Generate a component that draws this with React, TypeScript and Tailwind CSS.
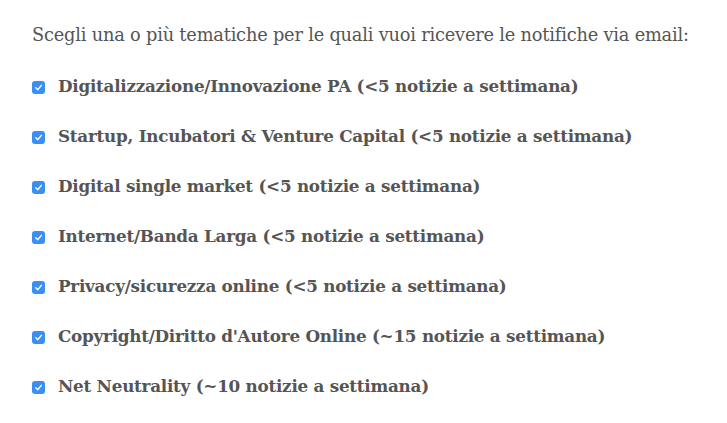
import React from 'react';

const topics = [
  'Digitalizzazione/Innovazione PA (<5 notizie a settimana)',
  'Startup, Incubatori & Venture Capital (<5 notizie a settimana)',
  'Digital single market (<5 notizie a settimana)',
  'Internet/Banda Larga (<5 notizie a settimana)',
  'Privacy/sicurezza online (<5 notizie a settimana)',
  "Copyright/Diritto d'Autore Online (~15 notizie a settimana)",
  'Net Neutrality (~10 notizie a settimana)',
];

const CheckBox: React.FC = () => (
  <span className="w-[13px] h-[13px] rounded-[3px] bg-[#3b8ef3] flex items-center justify-center shrink-0">
    <svg width="9" height="9" viewBox="0 0 10 10" fill="none">
      <path d="M2 5.2 L4.2 7.4 L8.2 2.6" stroke="white" strokeWidth="1.6" strokeLinecap="round" strokeLinejoin="round" />
    </svg>
  </span>
);

export default function App() {
  return (
    <div className="w-[727px] h-[423px] bg-white pl-[32px] pt-[21px] text-[#555555] font-['DejaVu_Serif',serif]">
      <p className="text-[17.8px] leading-[28px] tracking-[-0.2px]">
        Scegli una o più tematiche per le quali vuoi ricevere le notifiche via email:
      </p>
      <ul className="mt-[24px] flex flex-col gap-[22px]">
        {topics.map((topic) => (
          <li key={topic} className="flex items-center h-[28px]">
            <CheckBox />
            <span className="ml-[13px] text-[16.8px] font-bold tracking-[-0.25px]">{topic}</span>
          </li>
        ))}
      </ul>
    </div>
  );
}
